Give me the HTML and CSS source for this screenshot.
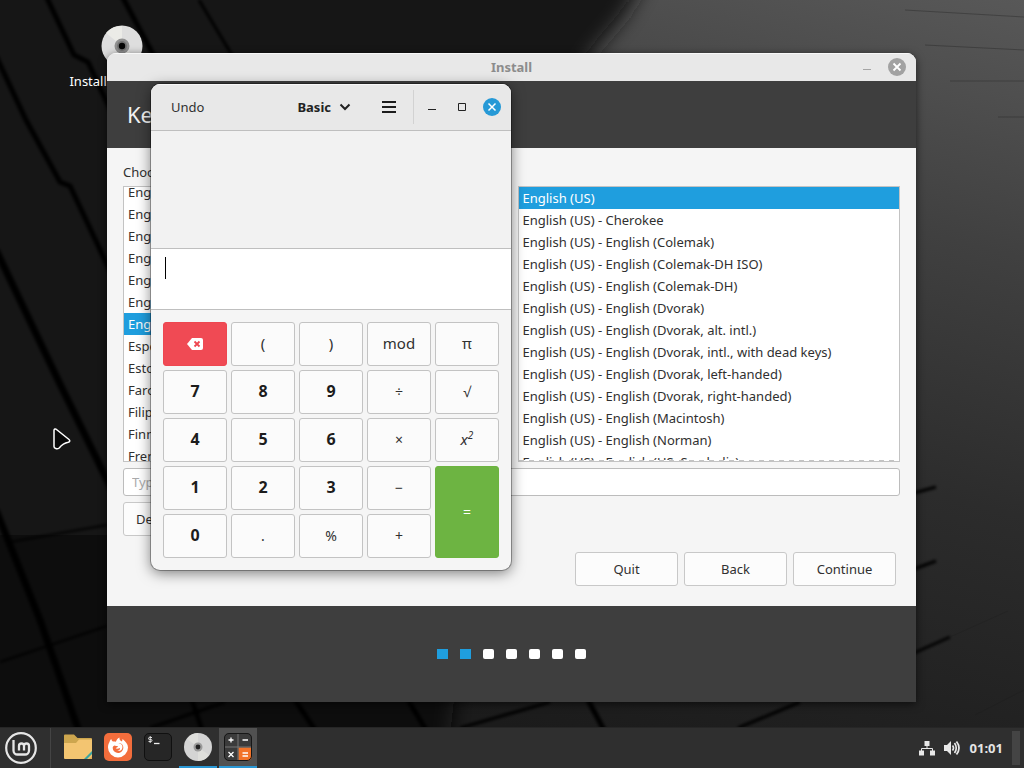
FILE: index.html
```html
<!DOCTYPE html>
<html lang="en">
<head>
<meta charset="utf-8">
<title>Desktop</title>
<link rel="stylesheet" href="styles.css">
</head>
<body class="desktop">
<svg class="wallpaper" viewBox="0 0 1024 768" preserveAspectRatio="xMidYMid slice" aria-hidden="true">
  <defs>
    <linearGradient id="slab" x1="1" y1="0" x2="0.65" y2="1">
      <stop offset="0" stop-color="#585858"/><stop offset=".3" stop-color="#404040"/><stop offset=".6" stop-color="#2c2c2c"/><stop offset="1" stop-color="#1b1b1b"/>
    </linearGradient>
    <linearGradient id="shade" x1="0" y1="0" x2="0" y2="1">
      <stop offset="0" stop-color="#1a1a1a"/><stop offset=".5" stop-color="#121212"/><stop offset="1" stop-color="#101010"/>
    </linearGradient>
    <filter id="soft" x="-20%" y="-20%" width="140%" height="140%"><feGaussianBlur stdDeviation="10"/></filter>
    <filter id="fine" x="-20%" y="-20%" width="140%" height="140%"><feGaussianBlur stdDeviation="1.500"/></filter>
  </defs>
  <rect width="1024" height="768" fill="url(#slab)"/>
  <path d="M-40-40H655L625 15 590 56 500 300 440 820H-40z" fill="url(#shade)" filter="url(#soft)"/>
  <g fill="none" stroke="#060606" filter="url(#fine)">
    <path stroke-width="5" d="M46-4 74 55 88 62 120 130"/>
    <path stroke-width="5" d="M122-4 156 60M-4 56 26 120 60 182 70 186 112 275"/>
    <path stroke-width="3" d="M199 0 236 62"/>
    <path stroke-width="7" d="M-4 250 60 384 112 490M-4 510 40 620 82 740"/>
    <path stroke-width="2" d="M10 542 107 525M0 662 107 626"/>
    <path stroke-width="5" d="M192 700 202 730M295 700 315 730M408 700 426 730M588 700 604 730"/>
    <path stroke-width="3" d="M150 728 225 702M460 728 550 702M738 728 800 702"/>
    <path stroke-width="3" d="M914 493 936 487M914 569 936 561M914 653 950 637"/>
  </g>
  <g fill="none" stroke="#1c1c1c" stroke-opacity=".35">
    <path d="M905 10 1024 17M925 45 1024 50M950 81H1024M998 117H1024M950 637 1008 611M975 715 1024 690"/>
  </g>
</svg>

<main class="workspace">
  <a class="shortcut" href="#install">
    <svg class="shortcut-icon" viewBox="0 0 42 42" aria-hidden="true">
      <circle cx="21" cy="21" r="20.500" fill="#dedede"/>
      <path d="M21 21 5 8A20 20 0 0 1 21 1zM21 21 37 34A20 20 0 0 1 21 41z" fill="#ebebe7"/>
      <circle cx="21" cy="21" r="7.500" fill="#909090"/><circle cx="21" cy="21" r="5" fill="#737373"/><circle cx="21" cy="21" r="3.200" fill="#050505"/>
    </svg>
    <span>Install Linux Mint</span>
  </a>

  <section class="window installer" id="install" aria-label="Install">
    <header class="titlebar">
      <h1 class="titlebar-name">Install</h1>
      <div class="titlebar-controls">
        <button class="control" aria-label="Minimize"><svg viewBox="0 0 18 18" width="18" height="18"><path d="M5 11.500h8" stroke="#a5a5a5"/></svg></button>
        <button class="control" aria-label="Close"><svg viewBox="0 0 18 18" width="18" height="18"><circle cx="9" cy="9" r="9" fill="#a2a2a2"/><path d="m5.500 5.500 7 7m0-7-7 7" stroke="#fff" stroke-width="1.800"/></svg></button>
      </div>
    </header>
    <h2 class="installer-heading">Keyboard layout</h2>
    <div class="installer-body">
      <p class="installer-label" id="layout-label">Choose your keyboard layout:</p>
      <div class="lists">
        <ul class="list scrolled" role="listbox" aria-labelledby="layout-label">
          <li role="option">English (Cameroon)</li>
          <li role="option">English (Ghana)</li>
          <li role="option">English (India)</li>
          <li role="option">English (Nigeria)</li>
          <li role="option">English (South Africa)</li>
          <li role="option">English (UK)</li>
          <li role="option" class="selected" aria-selected="true">English (US)</li>
          <li role="option">Esperanto</li>
          <li role="option">Estonian</li>
          <li role="option">Faroese</li>
          <li role="option">Filipino</li>
          <li role="option">Finnish</li>
          <li role="option">French</li>
        </ul>
        <ul class="list overflowing" role="listbox" aria-label="Variant">
          <li role="option" class="selected" aria-selected="true">English (US)</li>
          <li role="option">English (US) - Cherokee</li>
          <li role="option">English (US) - English (Colemak)</li>
          <li role="option">English (US) - English (Colemak-DH ISO)</li>
          <li role="option">English (US) - English (Colemak-DH)</li>
          <li role="option">English (US) - English (Dvorak)</li>
          <li role="option">English (US) - English (Dvorak, alt. intl.)</li>
          <li role="option">English (US) - English (Dvorak, intl., with dead keys)</li>
          <li role="option">English (US) - English (Dvorak, left-handed)</li>
          <li role="option">English (US) - English (Dvorak, right-handed)</li>
          <li role="option">English (US) - English (Macintosh)</li>
          <li role="option">English (US) - English (Norman)</li>
          <li role="option">English (US) - English (US, Symbolic)</li>
        </ul>
      </div>
      <input class="test-field" type="text" placeholder="Type here to test your keyboard" aria-label="Type here to test your keyboard">
      <button class="button detect">Detect Keyboard Layout</button>
      <div class="actions">
        <button class="button">Quit</button>
        <button class="button">Back</button>
        <button class="button">Continue</button>
      </div>
    </div>
    <footer class="progress">
      <span class="dot done"></span><span class="dot done"></span><span class="dot"></span><span class="dot"></span><span class="dot"></span><span class="dot"></span><span class="dot"></span>
    </footer>
  </section>

  <section class="window calculator" aria-label="Calculator">
    <header class="calc-header">
      <button class="flat">Undo</button>
      <button class="flat mode">Basic <svg viewBox="0 0 12 8" width="12" height="8"><path d="m1.500 1.500 4.500 4.500 4.500-4.500" fill="none" stroke="#222" stroke-width="2"/></svg></button>
      <button class="control menu" aria-label="Menu"><svg viewBox="0 0 14 12" width="14" height="12"><path d="M0 1h14M0 6h14M0 11h14" stroke="#1c1c1c" stroke-width="2"/></svg></button>
      <div class="calc-controls">
        <button class="control" aria-label="Minimize"><svg viewBox="0 0 18 18" width="18" height="18"><path d="M5 11.500h8" stroke="#222"/></svg></button>
        <button class="control" aria-label="Maximize"><svg viewBox="0 0 18 18" width="18" height="18"><path d="M5.500 5.500h7v7h-7z" fill="none" stroke="#222"/></svg></button>
        <button class="control" aria-label="Close"><svg viewBox="0 0 18 18" width="18" height="18"><circle cx="9" cy="9" r="9" fill="#2699d6"/><path d="m5.500 5.500 7 7m0-7-7 7" stroke="#fff" stroke-width="1.500"/></svg></button>
      </div>
    </header>
    <div class="history"></div>
    <div class="entry" role="textbox" aria-label="Expression"><span class="caret"></span></div>
    <div class="keys">
      <button class="key clear" aria-label="Backspace"><svg viewBox="0 0 16 12" width="16" height="12"><path d="M5 0h9a2 2 0 0 1 2 2v8a2 2 0 0 1-2 2H5L0 6z" fill="#fff"/><path d="m7.500 3.500 5 5m0-5-5 5" stroke="#ee4650" stroke-width="1.800"/></svg></button>
      <button class="key">(</button>
      <button class="key">)</button>
      <button class="key">mod</button>
      <button class="key">π</button>
      <button class="key digit">7</button>
      <button class="key digit">8</button>
      <button class="key digit">9</button>
      <button class="key sign">÷</button>
      <button class="key sign">√</button>
      <button class="key digit">4</button>
      <button class="key digit">5</button>
      <button class="key digit">6</button>
      <button class="key sign">×</button>
      <button class="key power"><span>x<sup>2</sup></span></button>
      <button class="key digit">1</button>
      <button class="key digit">2</button>
      <button class="key digit">3</button>
      <button class="key sign">−</button>
      <button class="key sign equals">=</button>
      <button class="key digit">0</button>
      <button class="key sign">.</button>
      <button class="key sign">%</button>
      <button class="key sign">+</button>
    </div>
  </section>

  <svg class="pointer" viewBox="0 0 18 22" width="18" height="22" aria-hidden="true"><path d="M1 2.500C1 1 2.500.500 3.500 1.500L16 11.500c1.300 1.200.8 2.400-.8 2.800-4 .700-6 2-9 5.700C4 21.500 1 20.500 1 18.500z" fill="#080808" stroke="#fff" stroke-width="1.500"/></svg>
</main>

<nav class="panel" aria-label="Panel">
  <button class="start" aria-label="Menu"><svg viewBox="0 0 32 32" width="32" height="32"><circle cx="16" cy="16" r="14.800" fill="none" stroke="#e6e6e6" stroke-width="2.200"/><path d="M8.500 8V18.500a4 4 0 0 0 4 4h7.500a4 4 0 0 0 4-4V14a2.500 2.500 0 0 0-5 0v4.500M19 14a2.500 2.500 0 0 0-5 0v4.500" fill="none" stroke="#e6e6e6" stroke-width="2.300"/></svg></button>
  <div class="launchers">
    <button class="launcher" aria-label="Files"><svg viewBox="0 0 28 28" width="28" height="28"><path d="M0 2.500Q0 1.500 1 1.500h9l3.500 3.500H27q1 0 1 1V12H0z" fill="#cda64e"/><path d="M0 10h12l3-3.500h13V25q0 1-1 1H1q-1 0-1-1z" fill="#f3c571"/><path d="m20 26 8-8v3l-5 5z" fill="#3ba4a0"/><path d="m25 26 3-3v3z" fill="#e0ad58"/></svg></button>
    <button class="launcher" aria-label="Firefox"><svg viewBox="0 0 28 28" width="28" height="28"><rect width="28" height="28" rx="5" fill="#f36d3c"/><path d="M5.500 9c.3-1.500 1-2.500 1.800-3 .2 1.200.7 2 1.600 2.500 1.100-.2 2.100-.1 3 .3C12.500 7 13.500 5.500 15.500 4.500c-.3 2 .5 3 2.500 4l.6-2.500c3 2.500 5.400 5 5.400 8.500A10 10 0 0 1 14 24.500 10 10 0 0 1 4 14.500C4 12 4.500 10.500 5.500 9z" fill="#fff"/><path d="M10.500 12.500c1 .2 2 .7 3.500.7-.3 1.300-1.800 1.300-2.300 2.100 1 1 3 .2 4.300-.3.300 1.500-1 2.700-2.700 2.900 3 .8 5.200-1.200 5.200-3.900 0-1-.4-2-1.200-2.700-.8-.6-1.700-.8-2.800-.7 2-1 4.500.7 4.800 3.400.3 3.300-2.200 6-5.300 6a5.300 5.300 0 0 1-5.300-5.100c0-1 .5-1.900 1.800-2.400z" fill="#f36d3c"/></svg></button>
    <button class="launcher" aria-label="Terminal"><svg viewBox="0 0 28 28" width="28" height="28"><rect x=".5" y=".5" width="27" height="27" rx="4.500" fill="#262626" stroke="#101010"/><path d="M8 4.500H5.500Q4.500 4.500 4.500 5.500T5.500 6.500H7Q8 6.500 8 7.500T7 8.500H4.500M6.200 3v7" fill="none" stroke="#ddd"/><path d="M10 10.500h5.500" stroke="#eee" stroke-width="1.300"/></svg></button>
    <button class="launcher running" aria-label="Install"><svg viewBox="0 0 28 28" width="28" height="28"><circle cx="14" cy="14" r="14" fill="#d4d4d4"/><path d="M14 14 3 6A14 14 0 0 1 14 0zM14 14 25 22A14 14 0 0 1 14 28z" fill="#dededb"/><circle cx="14" cy="14" r="4.500" fill="#9a9a9a"/><circle cx="14" cy="14" r="2.400" fill="#222"/></svg></button>
    <button class="launcher running active" aria-label="Calculator"><svg viewBox="0 0 28 28" width="28" height="28"><rect width="28" height="28" rx="5" fill="#3b3b3b"/><path d="M14.500 14.500H28V23a5 5 0 0 1-5 5h-8.500z" fill="#f37329"/><path d="M14 0v28M0 14h28" stroke="#777"/><rect x=".5" y=".5" width="27" height="27" rx="4.500" fill="none" stroke="#171717"/><path d="M4.500 7h5M7 4.500v5M18.500 7h5.500M4.500 19l5 5m0-5-5 5M18.500 20h5.500m-5.500 3h5.500" stroke="#fff" stroke-width="1.300"/></svg></button>
  </div>
  <div class="tray">
    <svg viewBox="0 0 16 16" width="16" height="16" role="img" aria-label="Network"><path d="M5.500 1h5v5h-5zM0 10.500h5v5H0zM11 10.500h5v5h-5z" fill="#e8e8e8"/><path d="M8 6v2.500M2.500 11V8.500h11V11" fill="none" stroke="#e8e8e8"/></svg>
    <svg viewBox="0 0 17 16" width="17" height="16" role="img" aria-label="Volume"><path d="M0 5h3l4-4v14l-4-4H0z" fill="#e8e8e8"/><path d="M8.500 5.500q2 2.500 0 5M10.500 3q3.500 5 0 10M12.500 1.500q5 6.500 0 13" fill="none" stroke="#e8e8e8" stroke-width="1.700"/></svg>
    <time class="clock">01:01</time>
    <button class="show-desktop" aria-label="Show desktop"></button>
  </div>
</nav>
</body>
</html>
```
FILE: styles.css
```css
* { box-sizing: border-box; }

.desktop {
  margin: 0;
  height: 100vh;
  display: flex;
  flex-direction: column;
  overflow: hidden;
  background: #141414;
  color: #303030;
  font: 13px/22px "Noto Sans", "Open Sans", sans-serif;
}

button, input { font: inherit; color: inherit; }
button { padding: 0; border: 0; background: none; }
svg { display: block; flex: none; }

.wallpaper { position: absolute; inset: 0; width: 100%; height: 100%; }
.workspace { position: relative; flex: 1; }

.shortcut {
  position: absolute;
  left: 62px;
  top: 25px;
  width: 120px;
  display: flex;
  flex-direction: column;
  align-items: center;
  gap: 3px;
  color: #fff;
  text-decoration: none;
  white-space: nowrap;
}
.shortcut-icon { width: 42px; height: 42px; }

.window { position: absolute; overflow: hidden; }
.control { display: flex; }

.installer {
  left: 107px;
  right: 108px;
  top: 53px;
  border-radius: 9px 9px 0 0;
  background: #f5f5f5;
  box-shadow: 0 2px 8px rgba(0, 0, 0, .6);
}
.titlebar {
  display: grid;
  grid-template-columns: 1fr auto 1fr;
  align-items: center;
  height: 28px;
  padding: 0 10px;
  background: #e8e8e8;
  box-shadow: inset 0 1px #f8f8f8;
}
.titlebar-name { grid-column: 2; margin: 0; font-size: 13px; color: #8c8c8c; }
.titlebar-controls { display: flex; justify-content: flex-end; gap: 12px; }
.installer-heading {
  margin: 0;
  padding: 17px 20px 18px;
  background: #3e3e3e;
  color: #f2f2f2;
  font-size: 22px;
  line-height: 32px;
  font-weight: 400;
}
.installer-body { display: flex; flex-direction: column; padding: 13px 16px 20px; }
.installer-label { margin: 0 0 3px; }
.lists { display: grid; grid-template-columns: 1fr 1fr; gap: 12px; height: 276px; }
.list {
  position: relative;
  margin: 0;
  padding: 0;
  list-style: none;
  overflow: hidden;
  border: 1px solid #c3c3c3;
  background: #fff;
}
.list li { height: 22px; padding: 0 4px; white-space: nowrap; }
.list .selected { background: #1f9ede; color: #fff; }
.scrolled li:first-child { margin-top: -6px; }
.overflowing::after {
  content: "";
  position: absolute;
  inset: auto 0 0;
  height: 1px;
  background: repeating-linear-gradient(90deg, #c3c3c3 0 5px, #fff 5px 10px);
}
.test-field {
  width: 100%;
  height: 28px;
  margin: 6px 0;
  padding: 0 8px;
  border: 1px solid #bcbcbc;
  border-radius: 3px;
  background: #fff;
}
.test-field::placeholder { color: #aaa; }
.button {
  height: 34px;
  min-width: 103px;
  padding: 0 12px;
  border: 1px solid #c8c8c8;
  border-radius: 3px;
  background: #fcfcfc;
}
.detect { align-self: flex-start; }
.actions { display: flex; justify-content: flex-end; gap: 6px; padding: 16px 4px 0; }
.progress {
  display: flex;
  align-items: center;
  justify-content: center;
  gap: 12px;
  height: 96px;
  background: #3e3e3e;
}
.dot { width: 11px; height: 10px; border-radius: 2px; background: #fff; }
.dot.done { border-radius: 0; background: #1f9ede; }

.calculator {
  left: 151px;
  top: 84px;
  width: 360px;
  border-radius: 9px;
  background: #f5f5f5;
  box-shadow: 0 0 0 1px rgba(0, 0, 0, .3), 0 3px 14px rgba(0, 0, 0, .5);
}
.calc-header {
  display: flex;
  align-items: center;
  height: 47px;
  padding: 0 10px;
  border-bottom: 1px solid #bfbfbf;
  background: #e8e8e8;
  box-shadow: inset 0 1px #f8f8f8;
}
.flat { padding: 0 10px; }
.mode { display: flex; align-items: center; gap: 8px; margin-left: auto; color: #222; font-weight: 700; }
.menu { margin: 0 17px 0 21px; }
.calc-controls {
  display: flex;
  align-items: center;
  gap: 12px;
  align-self: stretch;
  margin: 6px 0;
  padding-left: 9px;
  border-left: 1px solid #d2d2d2;
}
.history { height: 117px; background: #f2f2f2; }
.entry {
  height: 62px;
  padding: 8px 14px;
  border: solid #bfbfbf;
  border-width: 1px 0;
  background: #fff;
}
.caret { display: block; width: 1px; height: 22px; background: #000; }
.keys {
  display: grid;
  grid-template-columns: repeat(5, 1fr);
  grid-auto-rows: 44px;
  gap: 4px;
  padding: 12px;
}
.key {
  display: flex;
  align-items: center;
  justify-content: center;
  padding-bottom: 2px;
  border: 1px solid #c3c3c3;
  border-radius: 3px;
  background: #fbfbfb;
  font-size: 15px;
}
.digit { color: #1c1c1c; font-size: 16px; font-weight: 700; }
.sign { padding-bottom: 0; font-size: 14px; }
.power { font-style: italic; }
.power sup { font-size: 10px; line-height: 0; }
.clear { padding-bottom: 0; border-color: #ee4650; background: #f04a54; }
.equals { grid-column: 5; grid-row: 4 / span 2; border-color: #6cb33f; background: #6db442; color: #fff; }

.pointer { position: absolute; left: 53px; top: 428px; }

.panel {
  position: relative;
  display: flex;
  height: 41px;
  border-top: 1px solid #262626;
  background: #2f2f2f;
}
.start {
  display: flex;
  align-items: center;
  width: 51px;
  padding-left: 5px;
  border-right: 1px solid #444;
}
.launchers { display: flex; gap: 2px; padding-left: 8px; }
.launcher {
  display: flex;
  align-items: center;
  justify-content: center;
  width: 38px;
  border-bottom: 2px solid transparent;
}
.running { border-color: #2a97d4; }
.active { background: #515151; }
.tray { display: flex; align-items: center; margin-left: auto; padding-right: 4px; gap: 9px; }
.clock { color: #e4e4e4; font-weight: 700; }
.show-desktop { align-self: stretch; width: 8px; margin: 3px 0; background: #444; }
```
